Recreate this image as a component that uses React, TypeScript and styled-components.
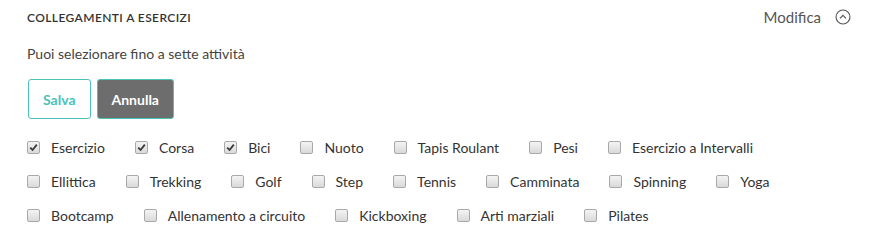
import React, { FunctionComponent } from "react"
import styled, { createGlobalStyle } from "styled-components"

const GlobalStyle = createGlobalStyle`
  body {
    margin: 0;
    background: #ffffff;
    font-family: Lato, "Open Sans", sans-serif;
    color: #333333;
  }
`

const rows: { label: string; checked?: boolean }[][] = [
  [
    { label: "Esercizio", checked: true },
    { label: "Corsa", checked: true },
    { label: "Bici", checked: true },
    { label: "Nuoto" },
    { label: "Tapis Roulant" },
    { label: "Pesi" },
    { label: "Esercizio a Intervalli" },
  ],
  [
    { label: "Ellittica" },
    { label: "Trekking" },
    { label: "Golf" },
    { label: "Step" },
    { label: "Tennis" },
    { label: "Camminata" },
    { label: "Spinning" },
    { label: "Yoga" },
  ],
  [
    { label: "Bootcamp" },
    { label: "Allenamento a circuito" },
    { label: "Kickboxing" },
    { label: "Arti marziali" },
    { label: "Pilates" },
  ],
]

const App: FunctionComponent = () => {
  return (
    <Wrapper>
      <GlobalStyle />
      <Header>
        <Title>COLLEGAMENTI A ESERCIZI</Title>
        <EditLink>
          Modifica
          <svg width="16" height="16" viewBox="0 0 16 16">
            <circle cx="8" cy="8" r="7" fill="none" stroke="#555" strokeWidth="1.1" />
            <path d="M5 9.3 L8 6.3 L11 9.3" fill="none" stroke="#555" strokeWidth="1.2" />
          </svg>
        </EditLink>
      </Header>
      <Hint>Puoi selezionare fino a sette attività</Hint>
      <Buttons>
        <Button>Salva</Button>
        <Button $dark>Annulla</Button>
      </Buttons>
      <List>
        {rows.map((row, i) => (
          <Row key={i}>
            {row.map(item => (
              <Item key={item.label}>
                <Box>
                  {item.checked && (
                    <svg width="9" height="9" viewBox="0 0 9 9">
                      <path d="M1.2 4.6 L3.6 7 L7.8 1.6" fill="none" stroke="#3a3a3a" strokeWidth="1.8" />
                    </svg>
                  )}
                </Box>
                <Label>{item.label}</Label>
              </Item>
            ))}
          </Row>
        ))}
      </List>
    </Wrapper>
  )
}

const Wrapper = styled.div`
  width: 883px;
  height: 242px;
  padding: 9px 0 0 27px;
  box-sizing: border-box;
`
const Header = styled.div`
  display: flex;
  justify-content: space-between;
  align-items: center;
  padding-right: 32px;
  height: 16px;
`
const Title = styled.h4`
  margin: 0;
  font-size: 12px;
  font-weight: 600;
  color: #333;
  letter-spacing: 0.4px;
`
const EditLink = styled.div`
  display: flex;
  align-items: center;
  gap: 14px;
  font-size: 15px;
  color: #555;
`
const Hint = styled.p`
  margin: 20px 0 0;
  font-size: 14px;
  color: #444;
`
const Buttons = styled.div`
  display: flex;
  gap: 6px;
  margin-top: 17px;
  padding-left: 1px;
`
const Button = styled.button<{ $dark?: boolean }>`
  height: 40px;
  padding: 0 14px;
  border: 1px solid #4cc2bb;
  border-radius: 3px;
  background: ${p => (p.$dark ? "#6d6d6d" : "#fff")};
  color: ${p => (p.$dark ? "#fff" : "#4cc2bb")};
  font-family: Lato, "Open Sans", sans-serif;
  font-size: 14px;
  font-weight: 700;
`
const List = styled.div`
  display: flex;
  flex-direction: column;
  gap: 14px;
  margin-top: 18px;
`
const Row = styled.div`
  display: flex;
  gap: 30px;
  height: 20px;
  align-items: center;
`
const Item = styled.label`
  display: flex;
  align-items: center;
  gap: 11px;
`
const Box = styled.span`
  width: 13px;
  height: 13px;
  box-sizing: border-box;
  border: 1px solid #a9a9a9;
  border-radius: 2px;
  background: linear-gradient(#f4f4f4, #d9d9d9);
  display: flex;
  align-items: center;
  justify-content: center;
`
const Label = styled.span`
  font-size: 14px;
  color: #333;
`
export default App
